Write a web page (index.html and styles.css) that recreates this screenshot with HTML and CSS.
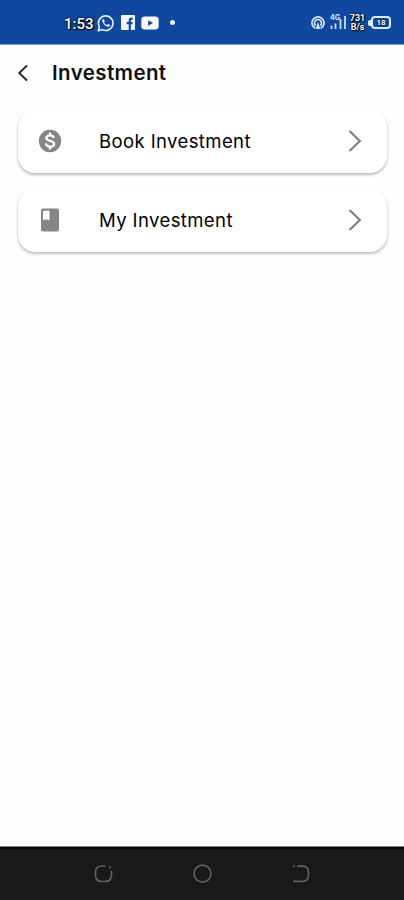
FILE: index.html
```
<!DOCTYPE html>
<html lang="en">
  <head>
    <meta charset="UTF-8" />
    <meta name="viewport" content="width=device-width, initial-scale=1" />
    <title>Investment</title>
    <link rel="stylesheet" href="styles.css">
  </head>
  <body>
    <div class="screen">
      <!-- Status bar -->
      <div class="status-bar">
        <div class="status-left">
          <span class="time">1:53</span>
          <svg class="icon-whatsapp" width="18" height="18" viewBox="0 0 18 18">
            <path d="M1.3 16.8l1.1-4A7.3 7.3 0 1 1 5.3 15.6z" fill="none" stroke="#e8f2ff" stroke-width="1.6" stroke-linejoin="round" />
            <path d="M6.2 4.7c-1.2.7-1.2 2.1-.5 3.5 1 2 2.6 3.6 4.7 4.4 1.3.5 2.5-.1 2.8-1.5l-2.2-1.2-1.1 1.1c-1.4-.6-2.3-1.5-2.9-2.8l.9-1z" fill="#e8f2ff" />
          </svg>
          <svg class="icon-facebook" width="14" height="15" viewBox="0 0 14 15">
            <rect width="14" height="15" rx="1" fill="#f3f8ff" />
            <path d="M7.7 15V9.3h-2V7h2V5.4c0-1.9 1-2.8 2.8-2.8h1.2v2.1h-.9c-.7 0-.9.4-.9 1V7h1.8l-.3 2.3H9.9V15z" fill="#1048a0" />
          </svg>
          <svg class="icon-youtube" width="18" height="14" viewBox="0 0 18 14">
            <rect x="0.3" y="0.5" width="17.4" height="13" rx="3.5" fill="#f8fbff" />
            <path d="M7.2 4.2v5.6L12 7z" fill="#1048a0" />
          </svg>
          <span class="dot"></span>
        </div>
        <div class="status-right">
          <svg class="icon-hotspot" width="14" height="14" viewBox="0 0 14 14">
            <path d="M4.3 12.3a6 6 0 1 1 5.4 0" fill="none" stroke="#dbeaff" stroke-width="1.7" />
            <path d="M4.6 9.6a3.5 3.5 0 1 1 4.8 0" fill="none" stroke="#dbeaff" stroke-width="1.5" />
            <path d="M7 6l2.3 7H4.7z" fill="#dbeaff" />
          </svg>
          <div class="signal">
            <span class="network">4G</span>
            <svg width="17" height="15" viewBox="0 0 17 15">
              <path d="M1.5 10.5V14M5.5 8.5V14M10.5 4V14M15 1V14" stroke="#c9ddf8" stroke-width="1.8" />
            </svg>
          </div>
          <div class="speed">
            <span>731</span>
            <span>B/s</span>
          </div>
          <div class="battery"><span>18</span></div>
        </div>
      </div>

      <!-- Page header -->
      <header class="header">
        <svg class="back" width="12" height="18" viewBox="0 0 12 18">
          <path d="M10 1.5L2.2 9l7.8 7.5" fill="none" stroke="#222" stroke-width="1.8" />
        </svg>
        <h1>Investment</h1>
      </header>

      <main class="menu">
        <a class="card">
          <svg class="card-icon" width="26" height="26" viewBox="0 0 24 24">
            <circle cx="12" cy="12" r="10.3" fill="#858585" />
            <path d="M15.6 9.2C15.3 7.6 14 6.8 12.1 6.8c-2.1 0-3.5 1-3.5 2.5 0 3.5 7.2 1.7 7.2 5.4 0 1.6-1.5 2.5-3.6 2.5-2.3 0-3.8-1-4-2.9M12 4.2v2.6M12 17.2v2.6" fill="none" stroke="#fff" stroke-width="2.1" />
          </svg>
          <span class="card-label">Book Investment</span>
          <svg class="chevron" width="14" height="22" viewBox="0 0 14 22">
            <path d="M1.5 1l10.3 10L1.5 21" fill="none" stroke="#828282" stroke-width="2.3" />
          </svg>
        </a>
        <a class="card">
          <svg class="card-icon" width="26" height="26" viewBox="0 0 26 26">
            <path fill="#858585" fill-rule="evenodd" d="M6 1.5h14a2 2 0 0 1 2 2v19a2 2 0 0 1-2 2H6a2 2 0 0 1-2-2v-19a2 2 0 0 1 2-2zM6 3.8v9.4l3.2-1 3.3 1V3.8z" />
          </svg>
          <span class="card-label">My Investment</span>
          <svg class="chevron" width="14" height="22" viewBox="0 0 14 22">
            <path d="M1.5 1l10.3 10L1.5 21" fill="none" stroke="#828282" stroke-width="2.3" />
          </svg>
        </a>
      </main>

      <!-- System navigation -->
      <nav class="nav-bar">
        <svg width="20" height="20" viewBox="0 0 20 20">
          <path d="M12.5 2H9Q2.5 2 2.5 8v3.500q0 6 6.500 6h3q6.500 0 6.500-6V7M16.300 4.200l1.600-1.600" />
        </svg>
        <svg width="20" height="20" viewBox="0 0 20 20">
          <circle cx="10.5" cy="9.7" r="8.5" />
        </svg>
        <svg width="20" height="20" viewBox="0 0 20 20">
          <path d="M2 2.2h1.8M6 2.2h5.500q6 0 6 6v3.100q0 6-6 6H2" />
        </svg>
      </nav>
    </div>
  </body>
</html>
```

FILE: styles.css
```
* {
  box-sizing: border-box;
}

body {
  margin: 0;
  font-family: Inter, "Open Sans", sans-serif;
  color: #111;
  background: #fefefe;
}

.screen {
  height: 900px;
  display: flex;
  flex-direction: column;
}

/* Status bar */
.status-bar {
  height: 45px;
  padding: 1px 13px 0 64px;
  display: flex;
  justify-content: space-between;
  align-items: center;
  background: #1048a0;
  border-bottom: 1px solid #7f9fcd;
  color: #fff;
}

.status-left,
.status-right {
  display: flex;
  align-items: center;
}

.time {
  width: 30px;
  margin-right: 3px;
  padding-top: 2px;
  font-family: Roboto, sans-serif;
  font-size: 15px;
  font-weight: 500;
  line-height: 18px;
  text-shadow: 0 0 2px #000, 0 0 2px #000, 1px 1px 1px #000;
}

.icon-facebook,
.icon-youtube {
  margin-left: 6px;
}

.dot {
  width: 5px;
  height: 5px;
  margin-left: 11px;
  border-radius: 50%;
  background: #e8f2ff;
}

.signal {
  position: relative;
  width: 17px;
  height: 15px;
  margin-left: 5px;
}

.signal svg {
  display: block;
}

.network {
  position: absolute;
  top: -1px;
  left: 0;
  font-size: 7px;
  font-weight: 700;
  line-height: 8px;
  color: #dbeaff;
}

.speed {
  width: 15px;
  margin-left: 3px;
  display: flex;
  flex-direction: column;
  align-items: center;
  font-family: Roboto, sans-serif;
  font-size: 9px;
  font-weight: 700;
  line-height: 9px;
  text-shadow: 0 0 1px #000, 0 0 2px #000, 1px 1px 1px #000;
}

.battery {
  width: 20px;
  height: 13px;
  margin-left: 6px;
  position: relative;
  display: flex;
  align-items: center;
  justify-content: center;
  border: 2px solid #dbeaff;
  border-radius: 4px;
  font-family: Roboto, sans-serif;
  font-size: 8px;
  font-weight: 700;
  text-shadow: 0 0 1px #000, 0 0 2px #000;
}

.battery::before {
  content: "";
  position: absolute;
  left: -5px;
  width: 3px;
  height: 6px;
  border-radius: 2px 0 0 2px;
  background: #dbeaff;
}

/* Header */
.header {
  height: 65px;
  padding: 0 17px 9px;
  display: flex;
  align-items: center;
}

h1 {
  margin: 0 0 0 23px;
  font-size: 20.5px;
  font-weight: 600;
  line-height: 24px;
  letter-spacing: 0.4px;
}

/* Menu cards */
.menu {
  flex: 1;
  padding: 0 17px 0 18px;
  display: flex;
  flex-direction: column;
  gap: 16px;
}

.card {
  height: 63px;
  padding: 0 25px 1px 19px;
  display: flex;
  align-items: center;
  border-radius: 17px;
  background: #fff;
  box-shadow: 0 2px 3px rgba(0, 0, 0, 0.26), 0 0 2px rgba(0, 0, 0, 0.06);
}

.card-label {
  flex: 1;
  margin-left: 36px;
  padding-bottom: 1px;
  color: #000;
  font-size: 18.5px;
  line-height: 24px;
  letter-spacing: 0.4px;
}

/* Navigation bar */
.nav-bar {
  height: 54px;
  padding: 0 93px;
  display: flex;
  align-items: center;
  justify-content: space-between;
  background: #191919;
  border-top: 1px solid #808080;
  box-shadow: inset 0 2px 0 #080808;
}

.nav-bar svg {
  fill: none;
  stroke: #606060;
  stroke-width: 1.7;
}
```
